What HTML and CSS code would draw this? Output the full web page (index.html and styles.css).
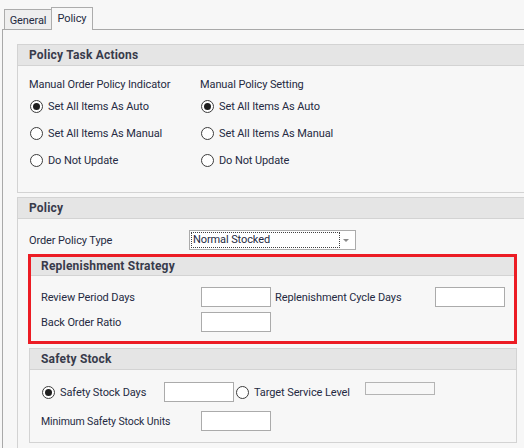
FILE: index.html
```html
<!DOCTYPE html>
<html>
<head>
<meta charset="utf-8">
<link rel="stylesheet" href="styles.css">
</head>
<body>
<div class="tabs">
  <div class="tab tab-general">General</div>
  <div class="tab tab-active">Policy</div>
</div>
<div class="page">
  <section class="group group-wide">
    <div class="ghead">Policy Task Actions</div>
    <div class="gbody tasks">
      <div class="col col-first">
        <div class="caption">Manual Order Policy Indicator</div>
        <div class="radio"><span class="dot checked"></span>Set All Items As Auto</div>
        <div class="radio"><span class="dot"></span>Set All Items As Manual</div>
        <div class="radio"><span class="dot"></span>Do Not Update</div>
      </div>
      <div class="col">
        <div class="caption">Manual Policy Setting</div>
        <div class="radio"><span class="dot checked"></span>Set All Items As Auto</div>
        <div class="radio"><span class="dot"></span>Set All Items As Manual</div>
        <div class="radio"><span class="dot"></span>Do Not Update</div>
      </div>
    </div>
  </section>

  <section class="group group-wide group-policy">
    <div class="ghead">Policy</div>
    <div class="gbody policy-body">
      <div class="row">
        <span class="label label-order">Order Policy Type</span>
        <div class="combo">
          <div class="combo-text">Normal Stocked</div>
          <div class="combo-arrow"></div>
        </div>
      </div>

      <section class="group replen">
        <div class="ghead ghead-small">Replenishment Strategy</div>
        <div class="gbody replen-body">
          <div class="row">
            <span class="label label-field">Review Period Days</span>
            <span class="input"></span>
            <span class="label label-cycle">Replenishment Cycle Days</span>
            <span class="input"></span>
          </div>
          <div class="row">
            <span class="label label-field">Back Order Ratio</span>
            <span class="input"></span>
          </div>
        </div>
      </section>

      <section class="group safety">
        <div class="ghead">Safety Stock</div>
        <div class="gbody safety-body">
          <div class="row row-top">
            <div class="radio radio-inline radio-days"><span class="dot checked"></span>Safety Stock Days</div>
            <span class="input"></span>
            <div class="radio radio-inline radio-target"><span class="dot"></span>Target Service Level</div>
            <span class="input input-disabled"></span>
          </div>
          <div class="row">
            <span class="label label-field label-small">Minimum Safety Stock Units</span>
            <span class="input"></span>
          </div>
        </div>
      </section>
    </div>
  </section>
</div>
</body>
</html>
```
FILE: styles.css
```css
* { box-sizing: border-box; }

html, body {
  margin: 0;
  padding: 0;
}

body {
  width: 524px;
  height: 448px;
  overflow: hidden;
  background: #f7f7f7;
  font-family: Roboto, "Liberation Sans", sans-serif;
  font-size: 11px;
  letter-spacing: -0.1px;
  color: #252a42;
}

/* tabs */
.tabs {
  display: flex;
  align-items: flex-end;
  height: 29px;
  padding: 7px 0 0 4px;
}

.tab {
  display: flex;
  align-items: center;
  justify-content: center;
  border: 1px solid #acacac;
  border-bottom: none;
  color: #252a42;
}

.tab-general {
  width: 48px;
  height: 20px;
  background: #eeeeee;
  padding-top: 1px;
}

.tab-active {
  position: relative;
  z-index: 1;
  width: 42px;
  height: 23px;
  margin-left: -1px;
  margin-bottom: -1px;
  background: #f7f7f7;
  padding-bottom: 1px;
}

/* page */
.page {
  margin-left: 2px;
  border-left: 1px solid #a9a9a9;
  border-top: 1px solid #a9a9a9;
  padding: 14px 0 0 14px;
  height: 419px;
}

.group {
  border: 1px solid #d3d3d3;
  background: #f7f7f7;
}

.group-wide {
  width: 530px;
}

.ghead {
  height: 21px;
  line-height: 20px;
  background: #e5e5e5;
  border-bottom: 1px solid #d3d3d3;
  padding-left: 11px;
  font-size: 12px;
  letter-spacing: 0.2px;
  font-weight: bold;
  color: #383b4b;
}

.tasks {
  display: flex;
  height: 126px;
  padding: 10px 0 0 11px;
}

.col {
  display: flex;
  flex-direction: column;
}

.col-first {
  width: 171px;
}

.caption {
  height: 17px;
  line-height: 17px;
}

.radio {
  display: flex;
  align-items: center;
  height: 27px;
  white-space: nowrap;
}

.dot {
  position: relative;
  width: 13px;
  height: 13px;
  flex: none;
  border: 1px solid #3c3c3c;
  border-radius: 50%;
  background: #ffffff;
  margin-left: 1px;
  margin-right: 5px;
}

.dot.checked::after {
  content: "";
  position: absolute;
  left: 2px;
  top: 2px;
  width: 7px;
  height: 7px;
  border-radius: 50%;
  background: #1e1e1e;
}

.group-policy {
  margin-top: 4px;
  height: 260px;
}

.policy-body {
  padding: 11px 0 0 11px;
}

.row {
  display: flex;
  align-items: center;
  height: 20px;
}

.label {
  white-space: nowrap;
}

.label-order {
  width: 160px;
}

.combo {
  position: relative;
  width: 167px;
  height: 20px;
  border: 1px solid #ababab;
  background: #ffffff;
}

.combo-text {
  margin: 1px;
  width: 149px;
  height: 16px;
  border: 1px dotted #404040;
  line-height: 14px;
  padding-left: 1px;
  color: #252a42;
}

.combo-arrow {
  position: absolute;
  right: 6px;
  top: 8px;
  width: 0;
  height: 0;
  border-left: 3px solid transparent;
  border-right: 3px solid transparent;
  border-top: 3px solid #8a8a8a;
}

/* replenishment */
.replen {
  width: 489px;
  margin: 4px 0 0 -1px;
  border: 3px solid #ec1c24;
}

.ghead-small {
  height: 19px;
  line-height: 18px;
  padding-left: 10px;
}

.replen-body {
  display: flex;
  flex-direction: column;
  gap: 5px;
  padding: 11px 0 9px 10px;
}

.label-field {
  width: 160px;
}

.label-cycle {
  width: 160px;
  margin-left: 4px;
}

.input {
  width: 70px;
  height: 20px;
  border: 1px solid #ababab;
  background: #ffffff;
  flex: none;
}

.input-disabled {
  height: 13px;
  align-self: flex-start;
  background: #f7f7f7;
  border-color: #b4b4b4;
}

/* safety stock */
.safety {
  width: 488px;
  margin-top: 4px;
}

.safety-body {
  display: flex;
  flex-direction: column;
  gap: 9px;
  padding: 12px 0 11px 11px;
}

.radio-inline {
  height: 20px;
}

.radio-days {
  width: 123px;
}

.radio-target {
  width: 129px;
  margin-left: 2px;
}

.radio-target .dot {
  margin-left: 0;
}

.label-small {
  font-size: 10.5px;
}
```
